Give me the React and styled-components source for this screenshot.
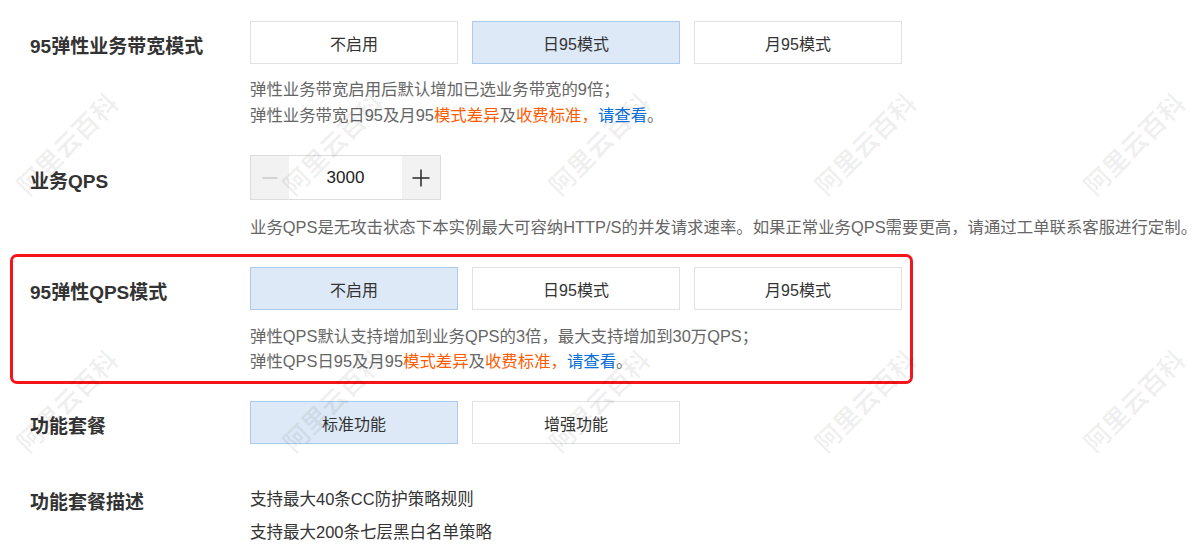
import React from "react";
import styled, { createGlobalStyle } from "styled-components";

const GlobalStyle = createGlobalStyle`
  html, body { margin: 0; padding: 0; background: #fff; }
  body {
    font-family: "Liberation Sans", "Noto Sans CJK SC", sans-serif;
    color: #333;
  }
  * { box-sizing: border-box; }
`;

const Page = styled.div`
  position: relative;
  width: 1200px;
  height: 555px;
  overflow: hidden;
  padding: 21px 10px 0;
  display: flex;
  flex-direction: column;
  align-items: flex-start;
`;

const FormItem = styled.div`
  display: flex;
  align-items: flex-start;
  margin-top: ${(p) => p.$gap || 0}px;
  ${(p) =>
    p.$highlight
      ? `
    width: 903px;
    border: 3px solid #f5141a;
    border-radius: 7px;
    padding: 10px 17px 7px;
  `
      : `
    padding: 0 0 0 20px;
  `}
`;

const Label = styled.div`
  width: 220px;
  flex-shrink: 0;
  font-size: 19px;
  font-weight: 600;
  color: #333;
  line-height: ${(p) => p.$h}px;
  margin-top: ${(p) => p.$shift ?? 4}px;
  white-space: nowrap;
`;

const Body = styled.div`
  display: flex;
  flex-direction: column;
  align-items: flex-start;
`;

const ButtonGroup = styled.div`
  display: flex;
  gap: 14px;
`;

const OptionButton = styled.div`
  width: 208px;
  height: 43px;
  display: flex;
  align-items: center;
  justify-content: center;
  font-size: 16px;
  color: #333;
  background: ${(p) => (p.$active ? "#dde9f7" : "#fff")};
  border: 1px solid ${(p) => (p.$active ? "#abcbee" : "#e2e2e2")};
`;

const Desc = styled.div`
  margin-top: ${(p) => p.$mt}px;
  font-size: 16.4px;
  line-height: ${(p) => p.$lh}px;
  color: #666;
  white-space: nowrap;
`;

const Orange = styled.span`
  color: #ff5c00;
`;

const Blue = styled.span`
  color: #0a6fd6;
`;

const Stepper = styled.div`
  display: flex;
  width: 191px;
  height: 45px;
  border: 1px solid #dcdcdc;
`;

const StepButton = styled.div`
  width: 38px;
  flex-shrink: 0;
  background: #f2f2f2;
  display: flex;
  align-items: center;
  justify-content: center;
`;

const StepValue = styled.div`
  flex: 1;
  background: #fff;
  display: flex;
  align-items: center;
  justify-content: center;
  font-size: 17px;
  color: #222;
`;

const FeatureList = styled.div`
  font-size: 16.5px;
  line-height: 33px;
  color: #333;
`;

const WatermarkLayer = styled.div`
  position: absolute;
  inset: 0;
  pointer-events: none;
  z-index: 5;
`;

const Mark = styled.span`
  position: absolute;
  left: ${(p) => p.$x}px;
  top: ${(p) => p.$y}px;
  transform: translate(-50%, -50%) rotate(-45deg);
  font-family: "Noto Sans CJK SC", sans-serif;
  font-size: 26px;
  font-weight: 700;
  letter-spacing: 0;
  color: rgba(0, 0, 0, 0.06);
  white-space: nowrap;
`;

const Minus = () => (
  <svg width="16" height="16" viewBox="0 0 16 16">
    <line x1="0.5" y1="8" x2="15.5" y2="8" stroke="#c9c9c9" strokeWidth="1.5" />
  </svg>
);

const Plus = () => (
  <svg width="18" height="18" viewBox="0 0 18 18">
    <line x1="0.5" y1="9" x2="17.5" y2="9" stroke="#333" strokeWidth="1.6" />
    <line x1="9" y1="0.5" x2="9" y2="17.5" stroke="#333" strokeWidth="1.6" />
  </svg>
);

const marks = [];
[143, 400].forEach((y) =>
  [66, 332, 598, 864, 1133].forEach((x) => marks.push({ x, y }))
);

const Options = ({ items, active }) => (
  <ButtonGroup>
    {items.map((t, i) => (
      <OptionButton key={t} $active={i === active}>
        {t}
      </OptionButton>
    ))}
  </ButtonGroup>
);

export default function App() {
  return (
    <>
      <GlobalStyle />
      <Page>
        <FormItem>
          <Label $h={43}>95弹性业务带宽模式</Label>
          <Body>
            <Options items={["不启用", "日95模式", "月95模式"]} active={1} />
            <Desc $mt={12} $lh={26}>
              <div>弹性业务带宽启用后默认增加已选业务带宽的9倍；</div>
              <div>
                弹性业务带宽日95及月95<Orange>模式差异</Orange>及
                <Orange>收费标准，</Orange>
                <Blue>请查看</Blue>。
              </div>
            </Desc>
          </Body>
        </FormItem>

        <FormItem $gap={27}>
          <Label $h={45}>业务QPS</Label>
          <Body>
            <Stepper>
              <StepButton>
                <Minus />
              </StepButton>
              <StepValue>3000</StepValue>
              <StepButton>
                <Plus />
              </StepButton>
            </Stepper>
            <Desc $mt={14} $lh={26}>
              业务QPS是无攻击状态下本实例最大可容纳HTTP/S的并发请求速率。如果正常业务QPS需要更高，请通过工单联系客服进行定制。
            </Desc>
          </Body>
        </FormItem>

        <FormItem $gap={14} $highlight>
          <Label $h={43}>95弹性QPS模式</Label>
          <Body>
            <Options items={["不启用", "日95模式", "月95模式"]} active={0} />
            <Desc $mt={14} $lh={25}>
              <div>弹性QPS默认支持增加到业务QPS的3倍，最大支持增加到30万QPS；</div>
              <div>
                弹性QPS日95及月95<Orange>模式差异</Orange>及
                <Orange>收费标准，</Orange>
                <Blue>请查看</Blue>。
              </div>
            </Desc>
          </Body>
        </FormItem>

        <FormItem $gap={17}>
          <Label $h={43}>功能套餐</Label>
          <Body>
            <Options items={["标准功能", "增强功能"]} active={0} />
          </Body>
        </FormItem>

        <FormItem $gap={35}>
          <Label $h={33} $shift={3}>
            功能套餐描述
          </Label>
          <FeatureList>
            <div>支持最大40条CC防护策略规则</div>
            <div>支持最大200条七层黑白名单策略</div>
          </FeatureList>
        </FormItem>

        <WatermarkLayer>
          {marks.map((m, i) => (
            <Mark key={i} $x={m.x} $y={m.y}>
              阿里云百科
            </Mark>
          ))}
        </WatermarkLayer>
      </Page>
    </>
  );
}
